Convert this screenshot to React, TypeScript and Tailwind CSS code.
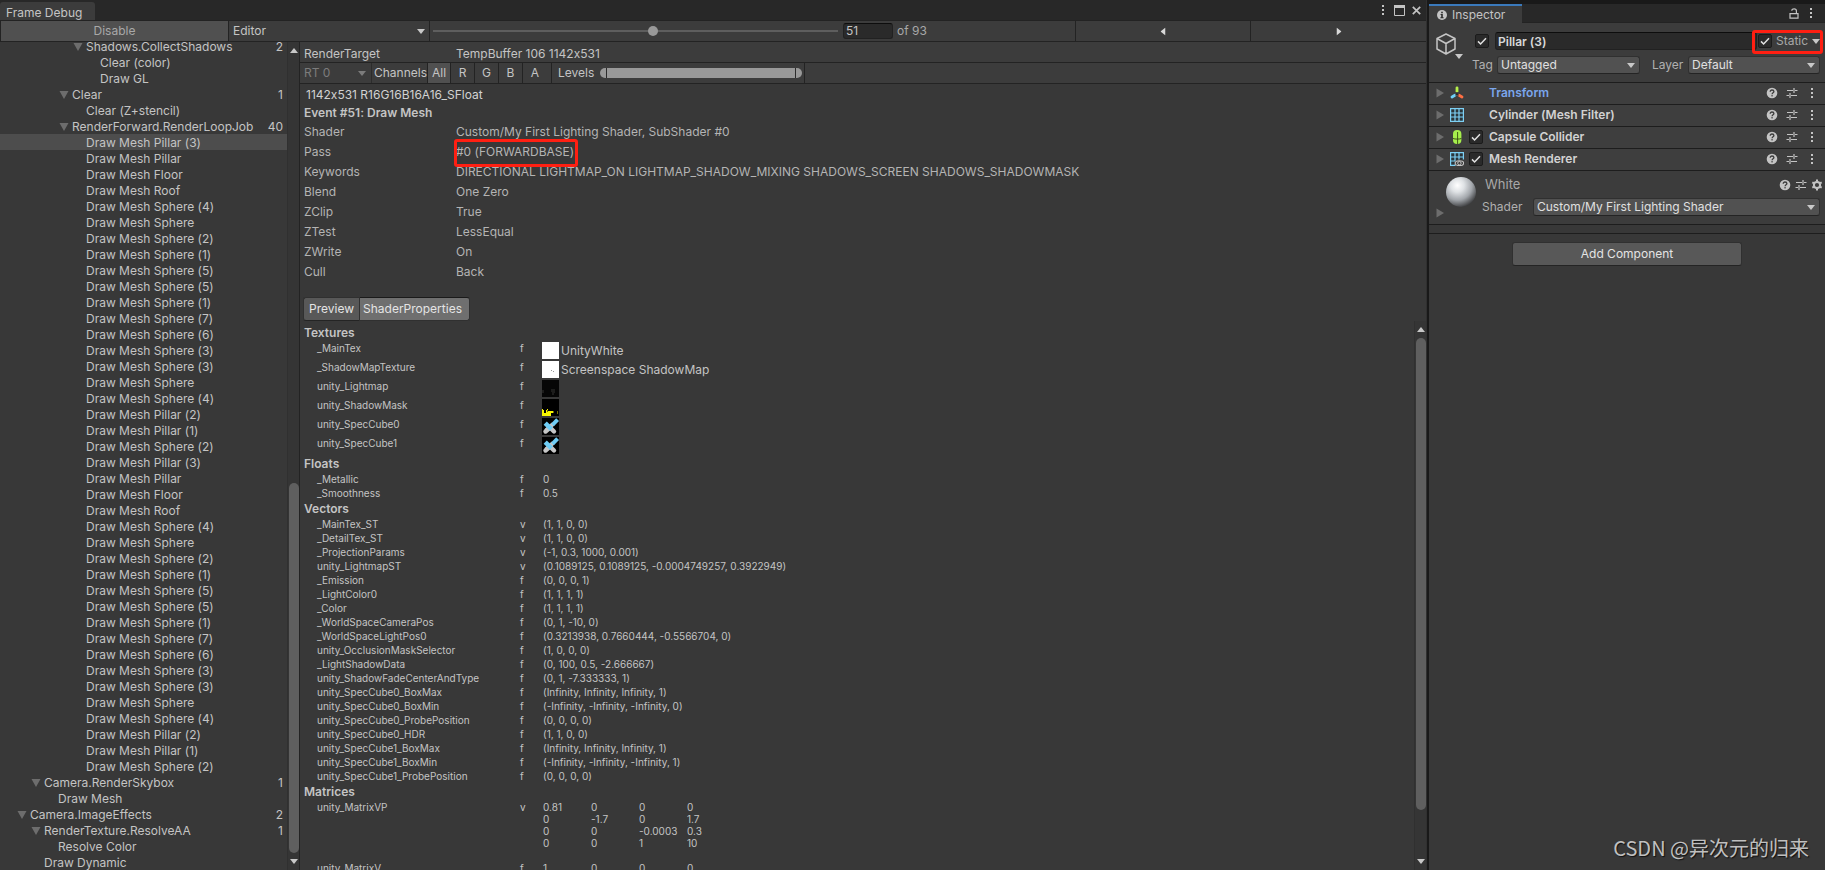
import type { ReactNode } from 'react';
import clsx from 'clsx';

type TreeNode = { label: string; depth: number; count?: number; selected?: boolean };

const meshDraws = [
  'Pillar (3)', 'Pillar', 'Floor', 'Roof', 'Sphere (4)', 'Sphere', 'Sphere (2)', 'Sphere (1)', 'Sphere (5)', 'Sphere (5)',
  'Sphere (1)', 'Sphere (7)', 'Sphere (6)', 'Sphere (3)', 'Sphere (3)', 'Sphere', 'Sphere (4)', 'Pillar (2)', 'Pillar (1)', 'Sphere (2)',
];

const tree: TreeNode[] = [
  { label: 'Shadows.CollectShadows', depth: 5, count: 2 },
  { label: 'Clear (color)', depth: 6 },
  { label: 'Draw GL', depth: 6 },
  { label: 'Clear', depth: 4, count: 1 },
  { label: 'Clear (Z+stencil)', depth: 5 },
  { label: 'RenderForward.RenderLoopJob', depth: 4, count: 40 },
  ...[...meshDraws, ...meshDraws].map((name, i) => ({ label: `Draw Mesh ${name}`, depth: 5, selected: i === 0 })),
  { label: 'Camera.RenderSkybox', depth: 2, count: 1 },
  { label: 'Draw Mesh', depth: 3 },
  { label: 'Camera.ImageEffects', depth: 1, count: 2 },
  { label: 'RenderTexture.ResolveAA', depth: 2, count: 1 },
  { label: 'Resolve Color', depth: 3 },
  { label: 'Draw Dynamic', depth: 2 },
];

const state = [
  ['Shader', 'Custom/My First Lighting Shader, SubShader #0'],
  ['Pass', '#0 (FORWARDBASE)'],
  ['Keywords', 'DIRECTIONAL LIGHTMAP_ON LIGHTMAP_SHADOW_MIXING SHADOWS_SCREEN SHADOWS_SHADOWMASK'],
  ['Blend', 'One Zero'],
  ['ZClip', 'True'],
  ['ZTest', 'LessEqual'],
  ['ZWrite', 'On'],
  ['Cull', 'Back'],
];

const floats = [
  ['_Metallic', 'f', '0'],
  ['_Smoothness', 'f', '0.5'],
];

const vectors = [
  ['_MainTex_ST', 'v', '(1, 1, 0, 0)'],
  ['_DetailTex_ST', 'v', '(1, 1, 0, 0)'],
  ['_ProjectionParams', 'v', '(-1, 0.3, 1000, 0.001)'],
  ['unity_LightmapST', 'v', '(0.1089125, 0.1089125, -0.0004749257, 0.3922949)'],
  ['_Emission', 'f', '(0, 0, 0, 1)'],
  ['_LightColor0', 'f', '(1, 1, 1, 1)'],
  ['_Color', 'f', '(1, 1, 1, 1)'],
  ['_WorldSpaceCameraPos', 'f', '(0, 1, -10, 0)'],
  ['_WorldSpaceLightPos0', 'f', '(0.3213938, 0.7660444, -0.5566704, 0)'],
  ['unity_OcclusionMaskSelector', 'f', '(1, 0, 0, 0)'],
  ['_LightShadowData', 'f', '(0, 100, 0.5, -2.666667)'],
  ['unity_ShadowFadeCenterAndType', 'f', '(0, 1, -7.333333, 1)'],
  ['unity_SpecCube0_BoxMax', 'f', '(Infinity, Infinity, Infinity, 1)'],
  ['unity_SpecCube0_BoxMin', 'f', '(-Infinity, -Infinity, -Infinity, 0)'],
  ['unity_SpecCube0_ProbePosition', 'f', '(0, 0, 0, 0)'],
  ['unity_SpecCube0_HDR', 'f', '(1, 1, 0, 0)'],
  ['unity_SpecCube1_BoxMax', 'f', '(Infinity, Infinity, Infinity, 1)'],
  ['unity_SpecCube1_BoxMin', 'f', '(-Infinity, -Infinity, -Infinity, 1)'],
  ['unity_SpecCube1_ProbePosition', 'f', '(0, 0, 0, 0)'],
];

const matrices = [
  { name: 'unity_MatrixVP', stage: 'v', rows: [['0.81', '0', '0', '0'], ['0', '-1.7', '0', '1.7'], ['0', '0', '-0.0003', '0.3'], ['0', '0', '1', '10']] },
  { name: 'unity_MatrixV', stage: 'f', rows: [['1', '0', '0', '0']] },
];

/* ---------- icons ---------- */

function Caret({ className }: { className?: string }) {
  return (
    <svg viewBox="0 0 8 5" className={clsx('w-2 h-[5px] shrink-0 pointer-events-none', className)} fill="currentColor">
      <path d="M0 0H8L4 5Z" />
    </svg>
  );
}

function Foldout({ open, className }: { open?: boolean; className?: string }) {
  return (
    <svg viewBox="0 0 10 10" className={clsx('size-[10px] shrink-0 text-[#6d6d6d]', className)} fill="currentColor">
      <path d={open ? 'M0.5 1H9.5L5 9Z' : 'M1.5 0.5V9.5L9 5Z'} />
    </svg>
  );
}

function Kebab() {
  return (
    <svg viewBox="0 0 4 12" className="w-1 h-3" fill="#c4c4c4">
      <rect x="1" y="1" width="2" height="2" />
      <rect x="1" y="5" width="2" height="2" />
      <rect x="1" y="9" width="2" height="2" />
    </svg>
  );
}

function HelpIcon() {
  return (
    <svg viewBox="0 0 12 12" className="size-3" fill="none">
      <circle cx="6" cy="6" r="5.3" fill="#c4c4c4" />
      <path d="M4.2 4.7C4.2 3.6 5 3 6 3s1.9.6 1.9 1.6C7.9 5.8 6.1 5.8 6.1 7.2" stroke="#3c3c3c" strokeWidth="1.3" />
      <rect x="5.4" y="8.1" width="1.3" height="1.3" fill="#3c3c3c" />
    </svg>
  );
}

function PresetIcon() {
  return (
    <svg viewBox="0 0 12 12" className="size-3" fill="none" stroke="#c4c4c4" strokeWidth="1.2">
      <path d="M1 3.5H7M9 3.5H11.5M8 1V6" />
      <path d="M0.5 8.5H3M5 8.5H11M4 6V11" />
    </svg>
  );
}

function GearIcon() {
  return (
    <svg viewBox="0 0 12 12" className="size-3" fill="none" stroke="#c4c4c4">
      <circle cx="6" cy="6" r="3.1" strokeWidth="2" />
      <path d="M6 0.6V2.4M6 9.6V11.4M1.3 3.3L2.9 4.2M9.1 7.8L10.7 8.7M1.3 8.7L2.9 7.8M9.1 4.2L10.7 3.3" strokeWidth="2" />
    </svg>
  );
}

function TransformIcon() {
  return (
    <svg viewBox="0 0 14 14" className="size-[14px]" strokeLinecap="round" strokeWidth="2.8">
      <path d="M7 1.8V5.2" stroke="#b6f04a" />
      <path d="M4.9 9.3L2 11" stroke="#6fd0f7" />
      <path d="M9.1 9.3L12 11" stroke="#ff6f43" />
      <path d="M7 6.4V8.2L5.4 9M7 8.2L8.6 9" stroke="#2a2a2a" strokeWidth="1" fill="none" />
    </svg>
  );
}

function MeshIcon({ eye }: { eye?: boolean }) {
  return (
    <svg viewBox="0 0 14 14" className="size-[14px]" fill="none">
      <rect x="0.5" y="0.5" width="13" height="13" fill="#2a3439" />
      <path d="M0.6 0.6H13.4V13.4H0.6ZM5 0.6V13.4M9 0.6V13.4M0.6 5H13.4M0.6 9H13.4" stroke="#7dd0f5" strokeWidth="1.2" />
      {eye && (
        <>
          <path d="M3.6 11.2C5 8.4 7 7.4 9 7.4H14V14H6Z" fill="#3c3c3c" />
          <ellipse cx="9.4" cy="11.2" rx="4.2" ry="2.4" stroke="#c4c4c4" strokeWidth="1.1" />
          <circle cx="9.4" cy="11.2" r="1.7" stroke="#c4c4c4" strokeWidth="1" />
        </>
      )}
    </svg>
  );
}

function CapsuleIcon() {
  return (
    <svg viewBox="0 0 14 14" className="size-[14px]" fill="none">
      <rect x="3" y="0" width="8.4" height="14" rx="4" fill="#a6ee4c" />
      <path d="M3 8.5C5 9.3 9.4 9.3 11.4 8.5M7.6 2V14" stroke="#33460f" strokeWidth="0.9" />
    </svg>
  );
}

function CubeIcon() {
  return (
    <svg viewBox="0 0 20 22" className="w-5 h-[22px]" fill="none" stroke="#c4c4c4" strokeWidth="1.5" strokeLinejoin="round">
      <path d="M10 1L19 5.5V16L10 21L1 16V5.5ZM1 5.5L10 10.5L19 5.5M10 10.5V21" />
    </svg>
  );
}

function MaterialBall() {
  return (
    <svg viewBox="0 0 32 32" className="size-8">
      <defs>
        <radialGradient id="ball" cx="0.38" cy="0.28" r="0.75">
          <stop offset="0" stopColor="#ffffff" />
          <stop offset="0.3" stopColor="#dfe2e5" />
          <stop offset="0.65" stopColor="#a2a6ab" />
          <stop offset="1" stopColor="#3a3b3d" />
        </radialGradient>
      </defs>
      <circle cx="16" cy="16" r="15" fill="url(#ball)" />
    </svg>
  );
}

/* ---------- texture thumbnails ---------- */

function WhiteThumb({ dotted }: { dotted?: boolean }) {
  return (
    <svg viewBox="0 0 17 17" className="size-[17px]">
      <rect width="17" height="17" fill="#fff" />
      {dotted && <path d="M9 9h1v1H9zM11 10h1v1h-1z" fill="#999" />}
    </svg>
  );
}

function LightmapThumb() {
  return (
    <svg viewBox="0 0 17 17" className="size-[17px]">
      <rect width="17" height="17" fill="#060606" />
      <path d="M9 9h4v4h-1v2h-2v-3H9zM0 10h2v3H0z" fill="#1d1d1c" />
    </svg>
  );
}

function ShadowMaskThumb() {
  return (
    <svg viewBox="0 0 17 17" className="size-[17px]">
      <rect width="17" height="17" fill="#000" />
      <path d="M0 10h1v1h1v3h2v-3h1v-1h1v2h5v2H9v3H0z" fill="#f6f400" />
      <path d="M5 11h1v2H5zM11 12h1v2h-1zM15 12h1v3h-1z" fill="#6d6c00" />
    </svg>
  );
}

function CubemapThumb() {
  return (
    <svg viewBox="0 0 17 17" className="size-[17px]" fill="none">
      <rect width="17" height="17" fill="#000" />
      <path d="M3.5 13.5L8 9.5L12 13.5" stroke="#c6c6c6" strokeWidth="4.4" strokeLinecap="round" />
      <path d="M11 6L4 12.5" stroke="#c6c6c6" strokeWidth="4" />
      <path d="M3.2 5.2L9.4 11.2" stroke="#6fcdf5" strokeWidth="4.6" />
      <path d="M10.5 6.8L15.6 1.6" stroke="#6fcdf5" strokeWidth="4" />
    </svg>
  );
}

const textures: { name: string; thumb: ReactNode; value?: string }[] = [
  { name: '_MainTex', thumb: <WhiteThumb />, value: 'UnityWhite' },
  { name: '_ShadowMapTexture', thumb: <WhiteThumb dotted />, value: 'Screenspace ShadowMap' },
  { name: 'unity_Lightmap', thumb: <LightmapThumb /> },
  { name: 'unity_ShadowMask', thumb: <ShadowMaskThumb /> },
  { name: 'unity_SpecCube0', thumb: <CubemapThumb /> },
  { name: 'unity_SpecCube1', thumb: <CubemapThumb /> },
];

/* ---------- shared controls ---------- */

function ScrollBar({ before, thumb, after }: { before: number; thumb: number; after: number }) {
  return (
    <div className="w-3 shrink-0 flex flex-col items-center bg-[#353535] border-l border-[#303030] text-[#c8c8c8] pl-px py-[6px]">
      <Caret className="rotate-180" />
      <div className="flex-1 flex flex-col py-1">
        <div style={{ flexGrow: before }} />
        <div className="w-[10px] rounded-full bg-[#5f5f5f]" style={{ flexGrow: thumb }} />
        <div style={{ flexGrow: after }} />
      </div>
      <Caret />
    </div>
  );
}

function Check({ label, className }: { label: string; className?: string }) {
  return (
    <span className={clsx('relative block size-[14px] shrink-0', className)}>
      <input
        type="checkbox"
        aria-label={label}
        defaultChecked
        className="peer block appearance-none size-[14px] rounded-[2px] bg-[#2a2a2a] border border-[#1b1b1b]"
      />
      <svg viewBox="0 0 14 14" className="absolute inset-0 hidden peer-checked:block pointer-events-none" fill="none" stroke="#e0e0e0" strokeWidth="1.5">
        <path d="M3 7.4L5.6 10L11 4.2" />
      </svg>
    </span>
  );
}

function Popup({ id, value, className }: { id: string; value: string; className?: string }) {
  return (
    <span className={clsx('relative flex items-center', className)}>
      <select
        id={id}
        className="appearance-none w-full h-[18px] pl-[3px] pr-5 leading-4 rounded-[3px] bg-[#515151] border border-[#303030] border-b-[#242424] text-[#e0e0e0]"
      >
        <option>{value}</option>
      </select>
      <Caret className="absolute right-[5px] text-[#c8c8c8]" />
    </span>
  );
}

/* ---------- frame debugger ---------- */

function Toolbar() {
  return (
    <div className="flex h-[22px] bg-[#3c3c3c] border-y border-[#232323]">
      <button className="w-[229px] shrink-0 bg-[#505050] border-x border-[#232323] text-[#a8a8a8]">Disable</button>
      <div className="relative flex items-center w-[201px] shrink-0 border-r border-[#232323]">
        <select aria-label="Connection" className="appearance-none w-full h-full pl-1">
          <option>Editor</option>
        </select>
        <Caret className="absolute right-[4px] text-[#c8c8c8]" />
      </div>
      <div className="flex-1 flex items-center min-w-0 pl-[3px]">
        <input
          type="range"
          aria-label="Frame event"
          min={1}
          max={93}
          defaultValue={51}
          className="appearance-none flex-1 min-w-0 h-5 bg-transparent [&::-webkit-slider-runnable-track]:h-[2px] [&::-webkit-slider-runnable-track]:bg-[#5e5e5e] [&::-webkit-slider-thumb]:appearance-none [&::-webkit-slider-thumb]:size-[10px] [&::-webkit-slider-thumb]:-mt-1 [&::-webkit-slider-thumb]:rounded-full [&::-webkit-slider-thumb]:bg-[#999999]"
        />
        <input
          type="text"
          aria-label="Event number"
          defaultValue="51"
          className="w-[50px] h-4 ml-[5px] px-[2px] rounded-[3px] bg-[#2a2a2a] border border-[#212121] border-t-[#0d0d0d]"
        />
        <span className="w-[182px] pl-1 text-[#a8a8a8]">of 93</span>
      </div>
      <button aria-label="Previous event" className="w-[175px] shrink-0 flex items-center justify-center border-l border-[#232323] text-[#d8d8d8]">
        <Caret className="rotate-90" />
      </button>
      <button aria-label="Next event" className="w-[176px] shrink-0 flex items-center justify-center border-l border-[#232323] text-[#d8d8d8]">
        <Caret className="-rotate-90" />
      </button>
    </div>
  );
}

function EventTree() {
  return (
    <div className="w-[300px] shrink-0 flex border-r border-[#232323]">
      <ul role="tree" aria-label="Frame events" className="flex-1 min-w-0 -mt-1">
        {tree.map((node, i) => (
          <li
            key={i}
            role="treeitem"
            aria-selected={!!node.selected}
            className={clsx('flex items-center h-4 leading-4 pt-[2px] pr-1', node.selected && 'bg-[#4d4d4d]')}
            style={{ paddingLeft: node.depth * 14 + 3 }}
          >
            <span className="w-[13px] shrink-0">{node.count && <Foldout open />}</span>
            <span className="flex-1 whitespace-nowrap">{node.label}</span>
            {node.count && <span>{node.count}</span>}
          </li>
        ))}
      </ul>
      <ScrollBar before={426} thumb={370} after={2} />
    </div>
  );
}

function Heading({ children }: { children: ReactNode }) {
  return <h2 className="h-4 leading-4 font-semibold pl-1">{children}</h2>;
}

function PropertyTable({ rows }: { rows: string[][] }) {
  return (
    <table className="table-fixed w-full mb-px text-[10px] leading-[14px]">
      <tbody>
        {rows.map(([name, stage, value]) => (
          <tr key={name}>
            <td className="w-[220px] pl-[17px]">{name}</td>
            <td className="w-[23px]">{stage}</td>
            <td>{value}</td>
          </tr>
        ))}
      </tbody>
    </table>
  );
}

function ShaderProperties() {
  return (
    <div className="flex-1 min-w-0 overflow-hidden pt-1">
      <Heading>Textures</Heading>
      <table className="table-fixed w-full mb-px">
        <tbody>
          {textures.map((t) => (
            <tr key={t.name} className="h-[19px] align-top text-[10px] leading-[14px]">
              <td className="w-[220px] pl-[17px]">{t.name}</td>
              <td className="w-[22px]">f</td>
              <td>
                <div className="flex items-center gap-[2px] h-[19px] text-xs">
                  {t.thumb}
                  {t.value}
                </div>
              </td>
            </tr>
          ))}
        </tbody>
      </table>
      <Heading>Floats</Heading>
      <PropertyTable rows={floats} />
      <Heading>Vectors</Heading>
      <PropertyTable rows={vectors} />
      <Heading>Matrices</Heading>
      {matrices.map((m) => (
        <div key={m.name} className="flex h-[61px] pt-px text-[10px] leading-3">
          <span className="w-[220px] pl-[17px]">{m.name}</span>
          <span className="w-[23px]">{m.stage}</span>
          <table className="table-fixed w-48 self-start">
            <tbody>
              {m.rows.map((row, r) => (
                <tr key={r}>
                  {row.map((cell, c) => (
                    <td key={c} className="w-12">{cell}</td>
                  ))}
                </tr>
              ))}
            </tbody>
          </table>
        </div>
      ))}
    </div>
  );
}

function EventDetails() {
  return (
    <div className="flex-1 min-w-0 flex flex-col">
      <div className="flex items-center h-[21px] pl-1 pt-[3px] bg-[#3c3c3c] border-b border-[#232323]">
        <span className="w-[152px]">RenderTarget</span>
        <span>TempBuffer 106 1142x531</span>
      </div>
      <div className="flex h-[21px] leading-5 bg-[#3c3c3c] border-b border-[#232323]">
        <div className="relative w-[72px] flex items-center border-r border-[#2c2c2c] text-[#7c7c7c]">
          <select aria-label="Render target" disabled className="appearance-none w-full h-full pl-1">
            <option>RT 0</option>
          </select>
          <Caret className="absolute right-[5px]" />
        </div>
        <span className="w-[55px] pl-[2px]">Channels</span>
        <button className="w-6 bg-[#505050] border-x border-[#232323]">All</button>
        <button className="w-6 border-r border-[#232323]">R</button>
        <button className="w-6 border-r border-[#232323]">G</button>
        <button className="w-6 border-r border-[#232323]">B</button>
        <button className="w-[29px] pr-1 border-r border-[#232323]">A</button>
        <span className="w-[48px] pl-[6px]">Levels</span>
        <div className="flex items-center w-[205px] pr-[2px] border-r border-[#232323]">
          <input
            type="range"
            aria-label="Black level"
            defaultValue={0}
            className="appearance-none w-1/2 h-[10px] rounded-l-full overflow-hidden bg-[#999999] [&::-webkit-slider-thumb]:appearance-none [&::-webkit-slider-thumb]:w-[7px] [&::-webkit-slider-thumb]:h-[10px] [&::-webkit-slider-thumb]:border-r [&::-webkit-slider-thumb]:border-[#2c2c2c]"
          />
          <input
            type="range"
            aria-label="White level"
            defaultValue={100}
            className="appearance-none w-1/2 h-[10px] rounded-r-full overflow-hidden bg-[#999999] [&::-webkit-slider-thumb]:appearance-none [&::-webkit-slider-thumb]:w-[7px] [&::-webkit-slider-thumb]:h-[10px] [&::-webkit-slider-thumb]:border-l [&::-webkit-slider-thumb]:border-[#2c2c2c]"
          />
        </div>
      </div>
      <p className="h-[21px] leading-[21px] pl-[6px] text-[#d2d2d2]">1142x531 R16G16B16A16_SFloat</p>
      <h1 className="h-[17px] leading-4 pl-1 font-semibold">Event #51: Draw Mesh</h1>
      <dl>
        {state.map(([name, value]) => (
          <div key={name} className="flex h-5 leading-5 pl-1 text-[#b4b4b4]">
            <dt className="w-[152px]">{name}</dt>
            <dd className="relative">
              {value}
              {name === 'Pass' && <span className="absolute -left-[2px] -right-[4px] -top-[3px] h-7 rounded-[3px] border-[3px] border-[#ff1f12]" />}
            </dd>
          </div>
        ))}
      </dl>
      <div className="flex mt-[15px] ml-[3px] h-6 text-[#e4e4e4]">
        <button className="w-14 rounded-l-[3px] bg-[#585858] border border-r-0 border-[#303030] border-b-[#242424]">Preview</button>
        <button className="w-[111px] pr-1 rounded-r-[3px] bg-[#6f6f6f] border border-[#303030] border-t-[#1a1a1a]">ShaderProperties</button>
      </div>
      <div className="flex-1 min-h-0 flex">
        <ShaderProperties />
        <ScrollBar before={2} thumb={470} after={45} />
      </div>
    </div>
  );
}

function FrameDebugger() {
  return (
    <section className="flex-1 min-w-0 flex flex-col border-r border-[#303030]">
      <header className="flex items-end h-5 bg-[#282828]">
        <div className="w-[95px] h-[18px] leading-[21px] pl-[6px] rounded-t-[3px] bg-[#3c3c3c]">Frame Debug</div>
        <div className="flex-1 flex items-center justify-end gap-[7px] h-5 pr-[5px]">
          <button aria-label="Menu" className="mr-[2px]"><Kebab /></button>
          <button aria-label="Maximize">
            <svg viewBox="0 0 11 11" className="size-[11px]" fill="none" stroke="#c4c4c4">
              <path d="M0.5 0.5H10.5V10.5H0.5Z" />
              <path d="M0 1.5H11" strokeWidth="3" />
            </svg>
          </button>
          <button aria-label="Close">
            <svg viewBox="0 0 9 9" className="size-[9px]" stroke="#c4c4c4" strokeWidth="1.7">
              <path d="M0.8 0.8L8.2 8.2M8.2 0.8L0.8 8.2" />
            </svg>
          </button>
        </div>
      </header>
      <Toolbar />
      <div className="flex-1 min-h-0 flex overflow-hidden">
        <EventTree />
        <EventDetails />
      </div>
    </section>
  );
}

/* ---------- inspector ---------- */

function ComponentRow({ title, icon, toggle, blue }: { title: string; icon: ReactNode; toggle?: boolean; blue?: boolean }) {
  return (
    <div className="flex items-center h-[22px] pl-[6px] pr-[7px] pb-px bg-[#3e3e3e] border-b border-[#1d1d1d]">
      <Foldout />
      <span className="w-[19px] ml-[5px]">{icon}</span>
      <span className="w-5">{toggle && <Check label={title} />}</span>
      <h2 className={clsx('flex-1 font-semibold', blue ? 'text-[#7ba6ec]' : 'text-[#d2d2d2]')}>{title}</h2>
      <div className="flex items-center gap-2">
        <button aria-label="Help"><HelpIcon /></button>
        <button aria-label="Presets"><PresetIcon /></button>
        <button aria-label="Options" className="w-3 flex justify-center"><Kebab /></button>
      </div>
    </div>
  );
}

function Inspector() {
  return (
    <section className="w-[398px] shrink-0 flex flex-col border-l-2 border-[#191919] bg-[#383838]">
      <header className="flex h-[23px] pt-1 bg-[#282828] shadow-[inset_0_4px_0_#191919]">
        <div className="flex items-center gap-[5px] w-[93px] pl-2 bg-[#3c3c3c] border-t-2 border-[#3a79bb]">
          <svg viewBox="0 0 10 10" className="size-[10px]">
            <circle cx="5" cy="5" r="5" fill="#c4c4c4" />
            <path d="M4.2 1.8h1.6v1.4H4.2zM3.6 4h2.2v3.2h.8v1H3.4v-1h.8V5h-.6z" fill="#2c2c2c" />
          </svg>
          Inspector
        </div>
        <div className="flex-1 flex items-center justify-end gap-[10px] pr-3 border-b border-[#232323]">
          <button aria-label="Lock">
            <svg viewBox="0 0 10 11" className="w-[10px] h-[11px]" fill="none" stroke="#c4c4c4" strokeWidth="1.2">
              <path d="M1 5.6H9V10.2H1ZM2.8 2.8C2.8 0.2 7.4 0.2 7.4 2.8V5.6" />
            </svg>
          </button>
          <button aria-label="Menu"><Kebab /></button>
        </div>
      </header>

      <div className="flex h-[60px] pt-[9px] pr-[5px] bg-[#3c3c3c] border-b border-[#1d1d1d]">
        <div className="relative w-[43px] pl-[7px] pt-[1px]">
          <CubeIcon />
          <Caret className="absolute left-[26px] top-[22px] text-[#c8c8c8]" />
        </div>
        <div className="flex-1">
          <div className="flex items-center h-[18px]">
            <Check label="Active" className="ml-[3px] mr-[6px]" />
            <input
              type="text"
              aria-label="Name"
              defaultValue="Pillar (3)"
              className="flex-1 min-w-0 h-[18px] px-[2px] rounded-[3px] bg-[#2a2a2a] border border-[#212121] border-t-[#0d0d0d] font-semibold text-[#d8d8d8]"
            />
            <label className="relative flex items-center w-[63px] pl-px text-[#a8a8a8]">
              <Check label="Static" className="mr-1" />
              Static
              <Caret className="absolute right-0 text-[#c8c8c8]" />
              <span className="absolute -left-[5px] -right-[3px] -top-[3px] h-6 rounded-[3px] border-[3px] border-[#ff1f12]" />
            </label>
          </div>
          <div className="flex items-center mt-[6px] text-[#b0b0b0]">
            <label htmlFor="tag" className="w-[25px]">Tag</label>
            <Popup id="tag" value="Untagged" className="flex-[143]" />
            <label htmlFor="layer" className="w-[48px] pl-3">Layer</label>
            <Popup id="layer" value="Default" className="flex-[132]" />
          </div>
        </div>
      </div>

      <ComponentRow title="Transform" blue icon={<TransformIcon />} />
      <ComponentRow title="Cylinder (Mesh Filter)" icon={<MeshIcon />} />
      <ComponentRow title="Capsule Collider" toggle icon={<CapsuleIcon />} />
      <ComponentRow title="Mesh Renderer" toggle icon={<MeshIcon eye />} />

      <div className="flex h-[54px] pl-[6px] bg-[#3c3c3c] border-b border-[#1d1d1d]">
        <Foldout className="self-end mb-[6px]" />
        <div className="w-8 pt-[5px]"><MaterialBall /></div>
        <div className="flex-1 pl-[5px] pt-[5px]">
          <div className="flex items-center justify-between h-[18px] pl-[3px] pr-[2px] text-[#a8a8a8]">
            <span className="text-[13px]">White</span>
            <div className="flex gap-1">
              <button aria-label="Help"><HelpIcon /></button>
              <button aria-label="Presets"><PresetIcon /></button>
              <button aria-label="Settings"><GearIcon /></button>
            </div>
          </div>
          <div className="flex items-center mt-1 pr-[5px] text-[#b0b0b0]">
            <label htmlFor="shader" className="w-[51px]">Shader</label>
            <Popup id="shader" value="Custom/My First Lighting Shader" className="flex-1" />
          </div>
        </div>
      </div>
      <div className="h-[9px] border-b border-[#1d1d1d]" />
      <button className="w-[230px] h-6 mt-2 self-center rounded-[3px] bg-[#585858] border border-[#303030] border-b-[#242424] text-[#e4e4e4]">
        Add Component
      </button>
    </section>
  );
}

export default function App() {
  return (
    <main className="relative flex h-screen overflow-hidden bg-[#383838] text-xs text-[#c4c4c4] font-['Inter',sans-serif] [font-feature-settings:'calt'_0]">
      <FrameDebugger />
      <Inspector />
      <p className="absolute right-4 bottom-2 text-xl leading-7 text-[#c0c0c0] font-['Noto_Sans_CJK_SC',sans-serif] [text-shadow:1px_1px_1px_#111]">
        CSDN @异次元的归来
      </p>
    </main>
  );
}
